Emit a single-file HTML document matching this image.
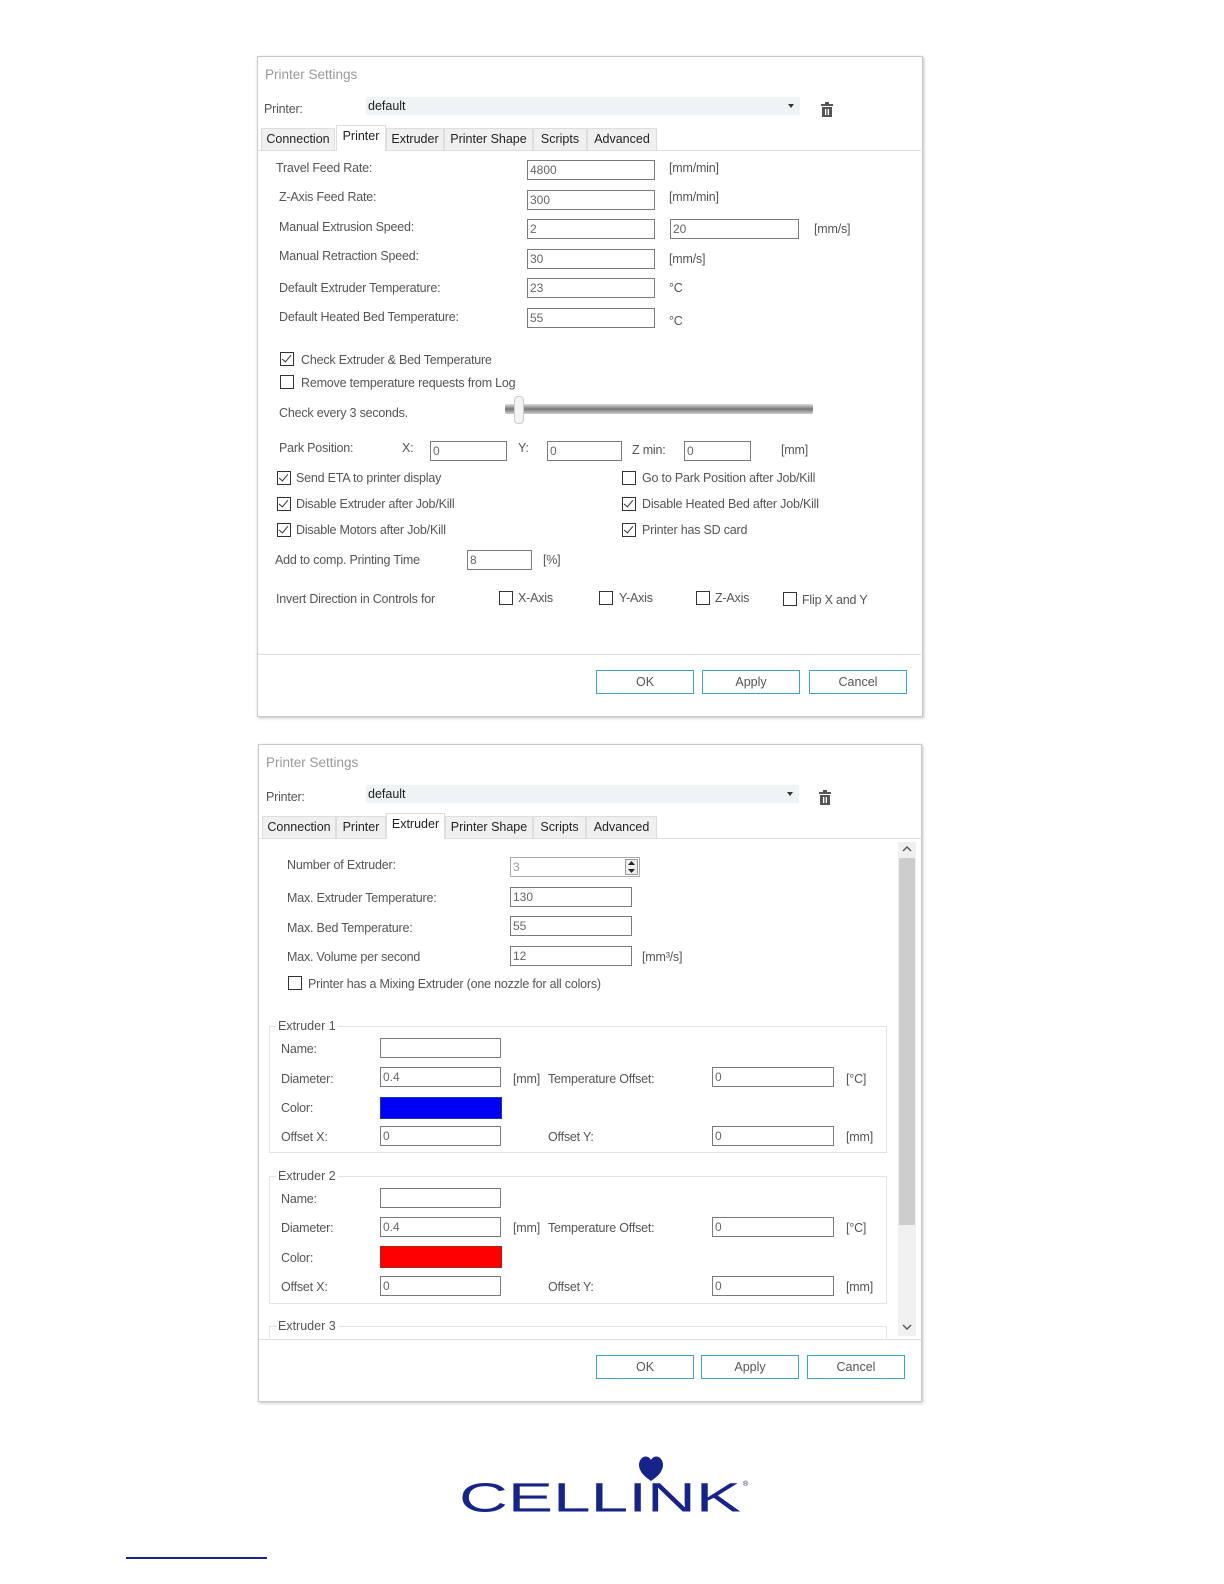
<!DOCTYPE html>
<html><head><meta charset="utf-8">
<style>
*{margin:0;padding:0;box-sizing:border-box}
body{width:1224px;height:1584px;background:#fff;position:relative;font-family:"Liberation Sans",sans-serif;overflow:hidden}
.a{position:absolute}
.t{position:absolute;font-size:12.5px;line-height:14px;color:#555;white-space:nowrap;letter-spacing:-0.2px}
.dlg{position:absolute;border:1px solid #c8c8c8;box-shadow:1px 1px 3px rgba(0,0,0,.25);background:#fff}
.title{position:absolute;font-size:13.5px;color:#999;white-space:nowrap}
.combo{position:absolute;background:#eef3f5;height:18px}
.combo span{position:absolute;left:2px;top:2px;font-size:12.5px;color:#222}
.combo i{position:absolute;right:6px;top:7px;width:0;height:0;border-left:3px solid transparent;border-right:3px solid transparent;border-top:4px solid #333}
.tab{position:absolute;height:22px;background:#f0f0f0;border:1px solid #ddd;border-bottom:none;font-size:12.5px;color:#222;text-align:center;line-height:21px;white-space:nowrap}
.tab.sel{background:#fff;height:26px;line-height:20px;z-index:2}
.in{position:absolute;height:20px;border:1px solid #7a7a7a;background:#fff;font-size:12px;color:#666;padding-left:2px;line-height:18px}
.cb{position:absolute;width:14px;height:14px;border:1px solid #333;background:#fff}
.cb.on::after{content:"";position:absolute;left:3px;top:0px;width:4px;height:8px;border-right:1.5px solid #333;border-bottom:1.5px solid #333;transform:rotate(40deg)}
.btn{position:absolute;height:24px;width:98px;border:1px solid #3aa3c8;font-size:12.5px;color:#555;text-align:center;line-height:22px;background:#fff}
.grp{position:absolute;border:1px solid #e2e2e2}
.leg{position:absolute;background:#fff;padding:0 2px;font-size:12.5px;color:#555;line-height:14px}
</style></head><body>

<!-- ============ Dialog 1 ============ -->
<div class="dlg" style="left:257px;top:56px;width:666px;height:661px"></div>
<div class="title" style="left:265px;top:67px">Printer Settings</div>
<div class="t" style="left:264px;top:102px">Printer:</div>
<div class="combo" style="left:366px;top:97px;width:434px"><span>default</span><i></i></div>
<svg class="a" style="left:820px;top:102px" width="14" height="16" viewBox="0 0 14 16"><rect x="1" y="2" width="12" height="2" fill="#555"/><rect x="5" y="0" width="4" height="2" fill="#555"/><rect x="2" y="5" width="10" height="10" fill="#555"/><rect x="5" y="7" width="1.3" height="6" fill="#fff"/><rect x="7.7" y="7" width="1.3" height="6" fill="#fff"/></svg>

<div class="tab" style="left:261px;top:128px;width:74px">Connection</div>
<div class="tab sel" style="left:336px;top:125px;width:50px">Printer</div>
<div class="tab" style="left:386px;top:128px;width:58px">Extruder</div>
<div class="tab" style="left:444px;top:128px;width:89px">Printer Shape</div>
<div class="tab" style="left:533px;top:128px;width:54px">Scripts</div>
<div class="tab" style="left:587px;top:128px;width:70px">Advanced</div>
<div class="a" style="left:258px;top:150px;width:663px;height:505px;border-top:1px solid #ddd;border-bottom:1px solid #ddd"></div>

<div class="t" style="left:276px;top:161px">Travel Feed Rate:</div>
<div class="in" style="left:527px;top:160px;width:128px">4800</div>
<div class="t" style="left:669px;top:161px">[mm/min]</div>
<div class="t" style="left:279px;top:190px">Z-Axis Feed Rate:</div>
<div class="in" style="left:527px;top:190px;width:128px">300</div>
<div class="t" style="left:669px;top:190px">[mm/min]</div>
<div class="t" style="left:279px;top:220px">Manual Extrusion Speed:</div>
<div class="in" style="left:527px;top:219px;width:128px">2</div>
<div class="in" style="left:670px;top:219px;width:129px">20</div>
<div class="t" style="left:814px;top:222px">[mm/s]</div>
<div class="t" style="left:279px;top:249px">Manual Retraction Speed:</div>
<div class="in" style="left:527px;top:249px;width:128px">30</div>
<div class="t" style="left:669px;top:252px">[mm/s]</div>
<div class="t" style="left:279px;top:281px">Default Extruder Temperature:</div>
<div class="in" style="left:527px;top:278px;width:128px">23</div>
<div class="t" style="left:669px;top:281px">°C</div>
<div class="t" style="left:279px;top:310px">Default Heated Bed Temperature:</div>
<div class="in" style="left:527px;top:308px;width:128px">55</div>
<div class="t" style="left:669px;top:314px">°C</div>

<div class="cb on" style="left:280px;top:352px"></div>
<div class="t" style="left:301px;top:353px">Check Extruder &amp; Bed Temperature</div>
<div class="cb" style="left:280px;top:375px"></div>
<div class="t" style="left:301px;top:376px">Remove temperature requests from Log</div>
<div class="t" style="left:279px;top:406px">Check every 3 seconds.</div>
<div class="a" style="left:505px;top:404px;width:308px;height:10px;background:linear-gradient(#ddd,#777 50%,#ccc);border-radius:2px"></div>
<div class="a" style="left:514px;top:396px;width:10px;height:28px;background:#f4f4f4;border:1px solid #ccc;border-radius:4px"></div>

<div class="t" style="left:279px;top:441px">Park Position:</div>
<div class="t" style="left:402px;top:441px">X:</div>
<div class="in" style="left:430px;top:441px;width:77px">0</div>
<div class="t" style="left:518px;top:441px">Y:</div>
<div class="in" style="left:547px;top:441px;width:75px">0</div>
<div class="t" style="left:632px;top:443px">Z min:</div>
<div class="in" style="left:684px;top:441px;width:67px">0</div>
<div class="t" style="left:781px;top:443px">[mm]</div>

<div class="cb on" style="left:277px;top:471px"></div>
<div class="t" style="left:296px;top:471px">Send ETA to printer display</div>
<div class="cb" style="left:622px;top:471px"></div>
<div class="t" style="left:642px;top:471px">Go to Park Position after Job/Kill</div>
<div class="cb on" style="left:277px;top:497px"></div>
<div class="t" style="left:296px;top:497px">Disable Extruder after Job/Kill</div>
<div class="cb on" style="left:622px;top:497px"></div>
<div class="t" style="left:642px;top:497px">Disable Heated Bed after Job/Kill</div>
<div class="cb on" style="left:277px;top:523px"></div>
<div class="t" style="left:296px;top:523px">Disable Motors after Job/Kill</div>
<div class="cb on" style="left:622px;top:523px"></div>
<div class="t" style="left:642px;top:523px">Printer has SD card</div>

<div class="t" style="left:275px;top:553px">Add to comp. Printing Time</div>
<div class="in" style="left:467px;top:550px;width:65px">8</div>
<div class="t" style="left:543px;top:553px">[%]</div>

<div class="t" style="left:276px;top:592px">Invert Direction in Controls for</div>
<div class="cb" style="left:499px;top:591px"></div><div class="t" style="left:518px;top:591px">X-Axis</div>
<div class="cb" style="left:599px;top:591px"></div><div class="t" style="left:619px;top:591px">Y-Axis</div>
<div class="cb" style="left:696px;top:591px"></div><div class="t" style="left:715px;top:591px">Z-Axis</div>
<div class="cb" style="left:783px;top:592px"></div><div class="t" style="left:802px;top:593px">Flip X and Y</div>

<div class="btn" style="left:596px;top:670px">OK</div>
<div class="btn" style="left:702px;top:670px">Apply</div>
<div class="btn" style="left:809px;top:670px">Cancel</div>

<!-- ============ Dialog 2 ============ -->
<div class="dlg" style="left:258px;top:744px;width:664px;height:658px"></div>
<div class="title" style="left:266px;top:755px">Printer Settings</div>
<div class="t" style="left:266px;top:790px">Printer:</div>
<div class="combo" style="left:366px;top:785px;width:433px"><span>default</span><i></i></div>
<svg class="a" style="left:818px;top:790px" width="14" height="16" viewBox="0 0 14 16"><rect x="1" y="2" width="12" height="2" fill="#555"/><rect x="5" y="0" width="4" height="2" fill="#555"/><rect x="2" y="5" width="10" height="10" fill="#555"/><rect x="5" y="7" width="1.3" height="6" fill="#fff"/><rect x="7.7" y="7" width="1.3" height="6" fill="#fff"/></svg>

<div class="tab" style="left:262px;top:816px;width:74px">Connection</div>
<div class="tab" style="left:336px;top:816px;width:50px">Printer</div>
<div class="tab sel" style="left:386px;top:813px;width:59px">Extruder</div>
<div class="tab" style="left:445px;top:816px;width:88px">Printer Shape</div>
<div class="tab" style="left:533px;top:816px;width:53px">Scripts</div>
<div class="tab" style="left:586px;top:816px;width:71px">Advanced</div>
<div class="a" style="left:259px;top:838px;width:662px;height:502px;border-top:1px solid #ddd;border-bottom:1px solid #ddd"></div>
<div class="a" style="left:898px;top:842px;width:18px;height:494px;background:#f0f0f0"></div>
<div class="a" style="left:899px;top:858px;width:16px;height:367px;background:#cdcdcd"></div>
<svg class="a" style="left:901px;top:844px" width="12" height="10"><path d="M2 7 L6 3 L10 7" stroke="#555" stroke-width="1.4" fill="none"/></svg>
<svg class="a" style="left:901px;top:1322px" width="12" height="10"><path d="M2 3 L6 7 L10 3" stroke="#555" stroke-width="1.4" fill="none"/></svg>

<div class="t" style="left:287px;top:858px">Number of Extruder:</div>
<div class="in" style="left:510px;top:857px;width:130px;border-color:#aaa;color:#999">3</div>
<div class="a" style="left:625px;top:859px;width:13px;height:16px;border:1px solid #999;background:#eee"></div>
<svg class="a" style="left:627px;top:860px" width="9" height="14"><path d="M1 5 L4.5 1 L8 5Z M1 9 L4.5 13 L8 9Z" fill="#222"/></svg>
<div class="t" style="left:287px;top:891px">Max. Extruder Temperature:</div>
<div class="in" style="left:510px;top:887px;width:122px">130</div>
<div class="t" style="left:287px;top:921px">Max. Bed Temperature:</div>
<div class="in" style="left:510px;top:916px;width:122px">55</div>
<div class="t" style="left:287px;top:950px">Max. Volume per second</div>
<div class="in" style="left:510px;top:946px;width:122px">12</div>
<div class="t" style="left:642px;top:950px">[mm³/s]</div>
<div class="cb" style="left:288px;top:976px"></div>
<div class="t" style="left:308px;top:977px">Printer has a Mixing Extruder (one nozzle for all colors)</div>

<div class="grp" style="left:269px;top:1026px;width:618px;height:127px"></div>
<div class="leg" style="left:276px;top:1019px">Extruder 1</div>
<div class="t" style="left:281px;top:1042px">Name:</div>
<div class="in" style="left:380px;top:1038px;width:121px"></div>
<div class="t" style="left:281px;top:1072px">Diameter:</div>
<div class="in" style="left:380px;top:1067px;width:121px">0.4</div>
<div class="t" style="left:513px;top:1072px">[mm]</div>
<div class="t" style="left:548px;top:1072px">Temperature Offset:</div>
<div class="in" style="left:712px;top:1067px;width:122px">0</div>
<div class="t" style="left:846px;top:1072px">[°C]</div>
<div class="t" style="left:281px;top:1101px">Color:</div>
<div class="a" style="left:380px;top:1097px;width:122px;height:22px;background:#0000f5;border:1px solid #2233aa"></div>
<div class="t" style="left:281px;top:1130px">Offset X:</div>
<div class="in" style="left:380px;top:1126px;width:121px">0</div>
<div class="t" style="left:548px;top:1130px">Offset Y:</div>
<div class="in" style="left:712px;top:1126px;width:122px">0</div>
<div class="t" style="left:846px;top:1130px">[mm]</div>

<div class="grp" style="left:269px;top:1176px;width:618px;height:128px"></div>
<div class="leg" style="left:276px;top:1169px">Extruder 2</div>
<div class="t" style="left:281px;top:1192px">Name:</div>
<div class="in" style="left:380px;top:1188px;width:121px"></div>
<div class="t" style="left:281px;top:1221px">Diameter:</div>
<div class="in" style="left:380px;top:1217px;width:121px">0.4</div>
<div class="t" style="left:513px;top:1221px">[mm]</div>
<div class="t" style="left:548px;top:1221px">Temperature Offset:</div>
<div class="in" style="left:712px;top:1217px;width:122px">0</div>
<div class="t" style="left:846px;top:1221px">[°C]</div>
<div class="t" style="left:281px;top:1251px">Color:</div>
<div class="a" style="left:380px;top:1246px;width:122px;height:22px;background:#ff0000;border:1px solid #aa2222"></div>
<div class="t" style="left:281px;top:1280px">Offset X:</div>
<div class="in" style="left:380px;top:1276px;width:121px">0</div>
<div class="t" style="left:548px;top:1280px">Offset Y:</div>
<div class="in" style="left:712px;top:1276px;width:122px">0</div>
<div class="t" style="left:846px;top:1280px">[mm]</div>

<div class="a" style="left:269px;top:1326px;width:618px;height:12px;border:1px solid #e2e2e2;border-bottom:none"></div>
<div class="leg" style="left:276px;top:1319px">Extruder 3</div>

<div class="btn" style="left:596px;top:1355px">OK</div>
<div class="btn" style="left:701px;top:1355px">Apply</div>
<div class="btn" style="left:807px;top:1355px">Cancel</div>

<!-- ============ Logo ============ -->
<svg class="a" style="left:455px;top:1450px" width="310" height="70" viewBox="0 0 310 70">
<path d="M192 28 C184 22 182 14 186 9 C189 5 194 6 196 10 C198 6 203 5 206 9 C210 14 208 22 200 28 L196 31Z" fill="#16238a"/>
<text x="4" y="63" font-family="Liberation Sans, sans-serif" font-size="50" fill="#16238a" textLength="282" lengthAdjust="spacingAndGlyphs" transform="scale(1,0.82) translate(0,12)">CELLINK</text>
<text x="288" y="36" font-family="Liberation Sans, sans-serif" font-size="7" fill="#16238a">®</text>
</svg>
<div class="a" style="left:126px;top:1557px;width:141px;height:1.5px;background:#1a2490"></div>
</body></html>
